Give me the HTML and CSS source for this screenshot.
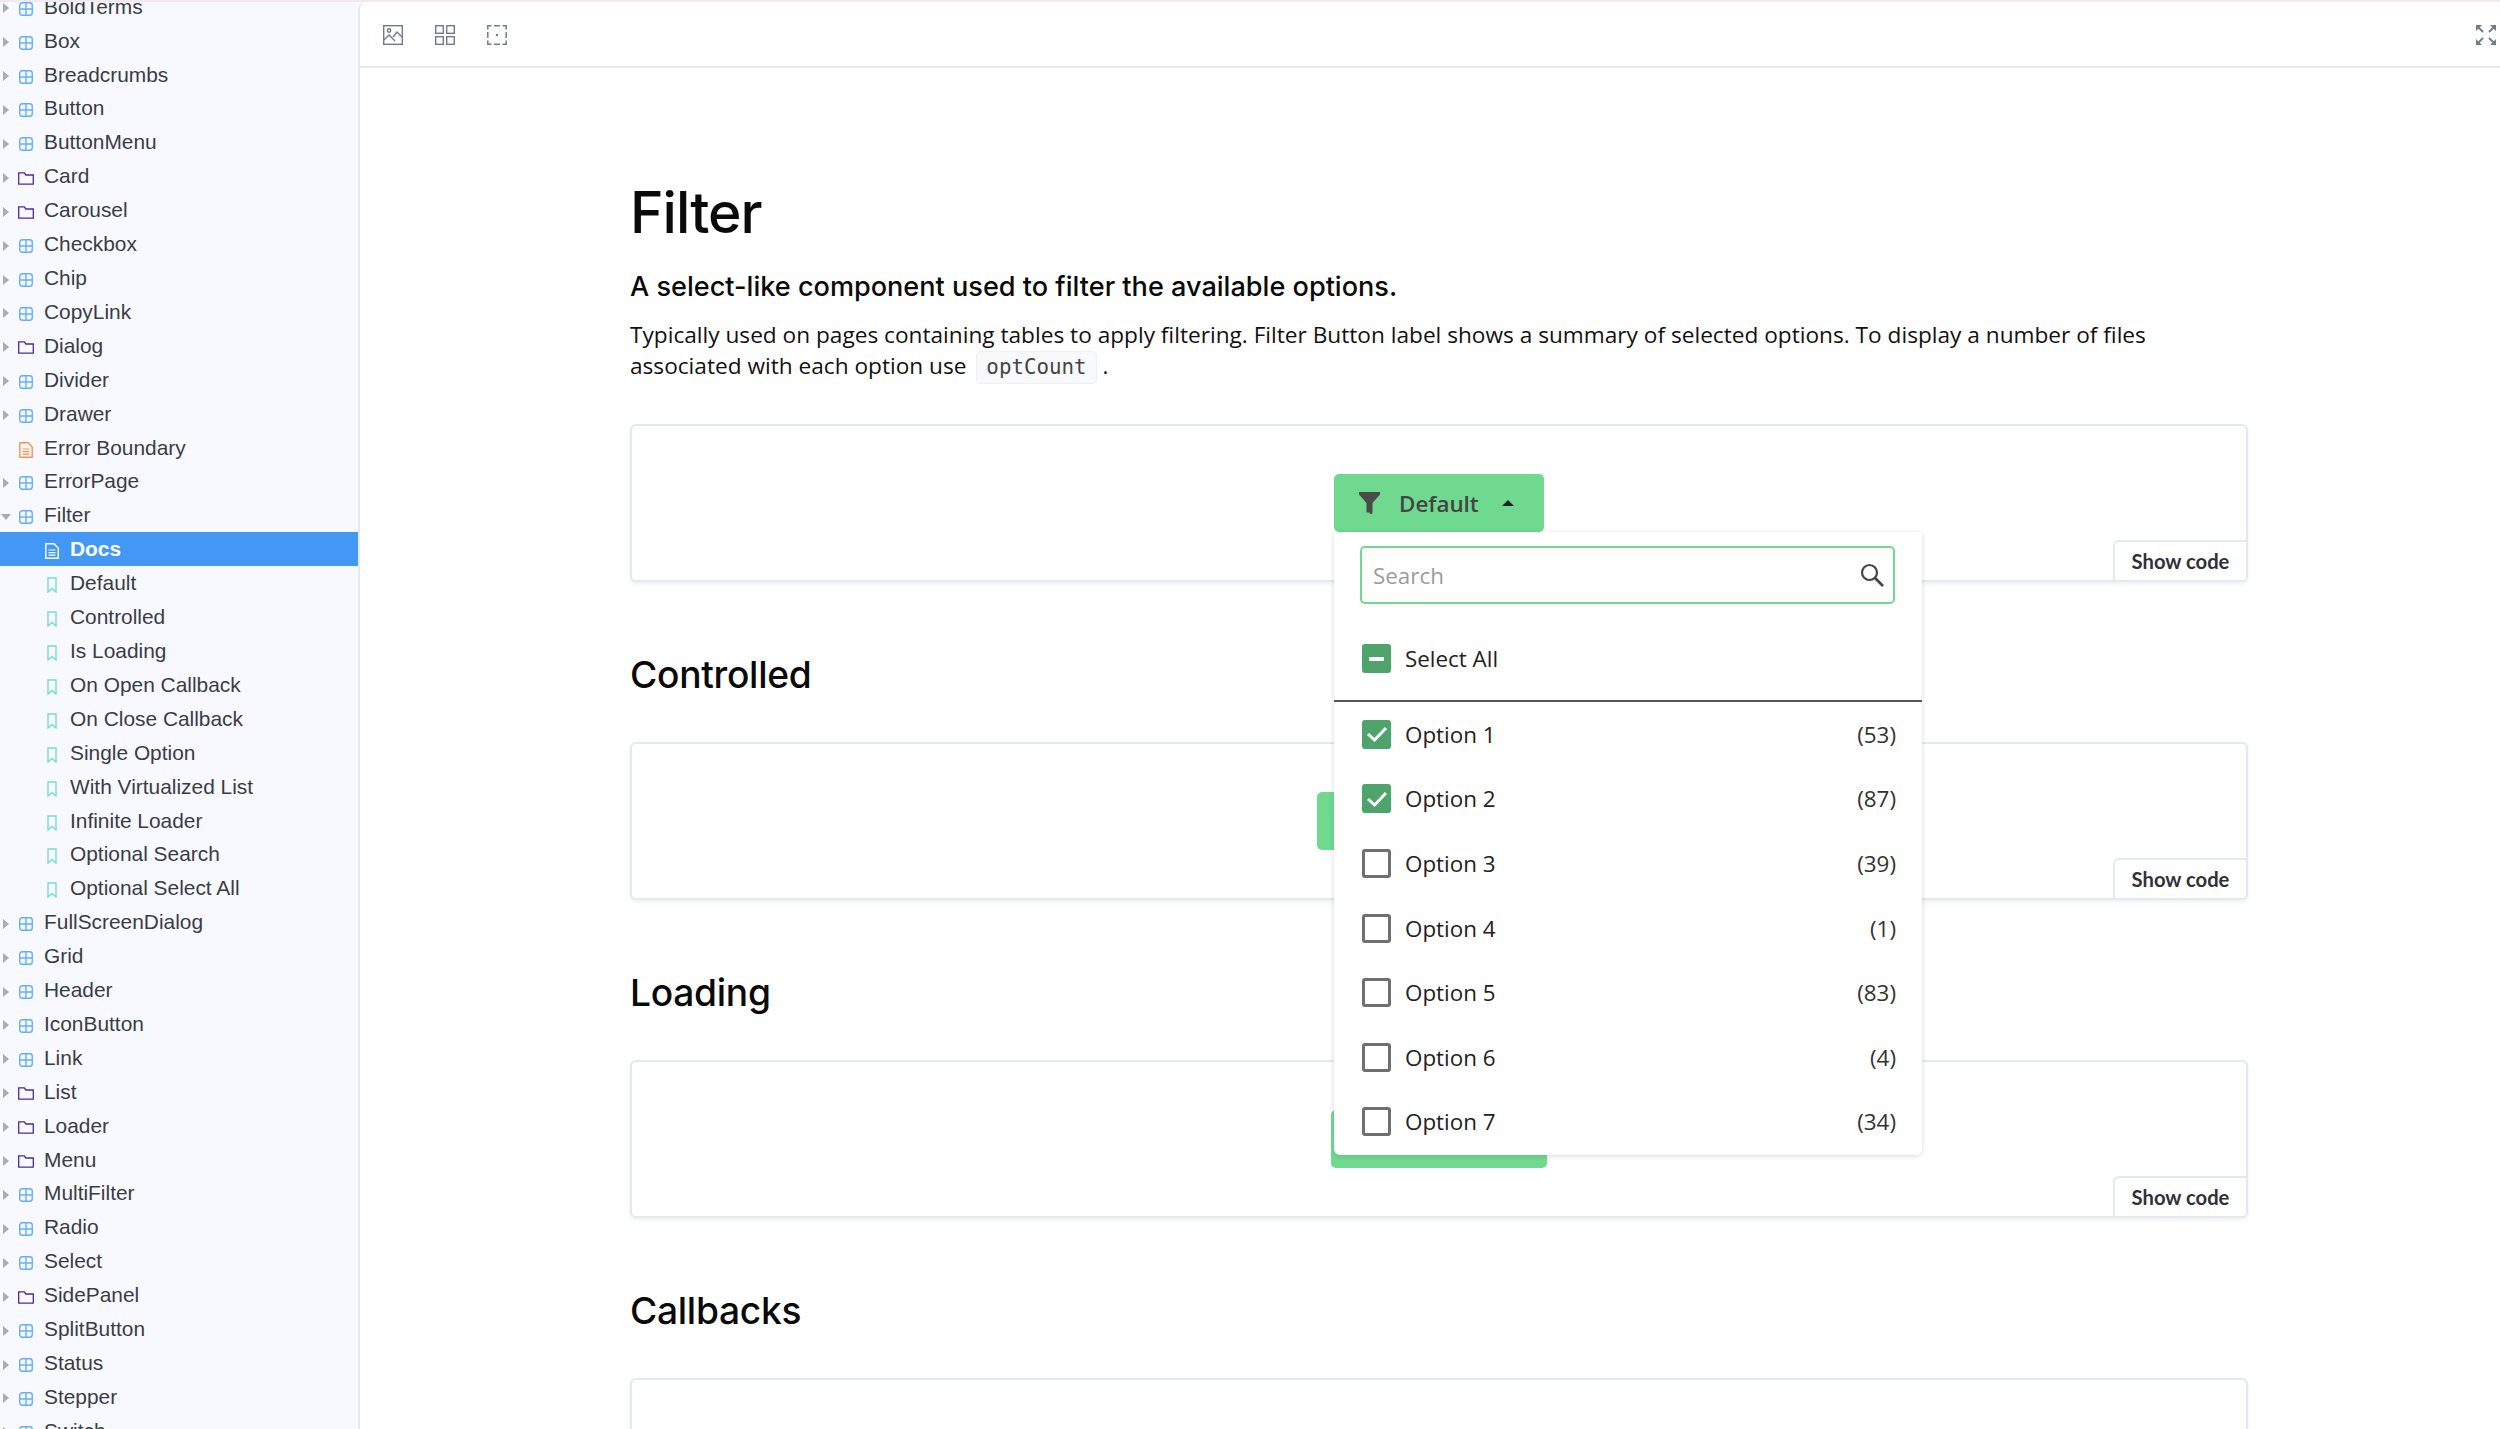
FILE: index.html
```html
<!DOCTYPE html>
<html lang="en">
<head>
<meta charset="utf-8">
<title>Filter</title>
<link rel="stylesheet" href="styles.css">
</head>
<body>
<svg class="defs" width="0" height="0" aria-hidden="true">
  <symbol id="i-comp" viewBox="0 0 14 14"><rect x="0.75" y="0.75" width="12.5" height="12.5" rx="2.5" fill="none" stroke="#63aeff" stroke-width="1.4"/><path d="M7 1v12M1 7h12" stroke="#63aeff" stroke-width="1.4"/></symbol>
  <symbol id="i-folder" viewBox="0 0 16 13"><path d="M.7.8h5.6l1.6 2.2h7.4v9.2H.7z" fill="none" stroke="#4b2a9e" stroke-width="1.3"/></symbol>
  <symbol id="i-doc" viewBox="0 0 14 16"><path d="M.8.8h8.2l4.2 4.2v10.2H.8z" fill="none" stroke="currentColor" stroke-width="1.4"/><path d="M3.5 7h7M3.5 9.6h7M3.5 12.2h7" stroke="currentColor" stroke-width="1.2"/></symbol>
  <symbol id="i-mark" viewBox="0 0 10 16"><path d="M1 1h8v14L5 11.5 1 15z" fill="none" stroke="#76dcd6" stroke-width="1.4"/></symbol>
  <symbol id="i-caret" viewBox="0 0 6 10"><path d="M0 0l6 5-6 5z" fill="#a9adb2"/></symbol>
  <symbol id="i-filter" viewBox="0 0 21 22"><path d="M0 0h21v2.5L13.5 11v9.5a1.5 1.5 0 0 1-3 0h-3V11L0 2.5z" fill="#4a4a4a"/></symbol>
  <symbol id="i-search" viewBox="0 0 24 24"><circle cx="9.5" cy="9.5" r="7.5" fill="none" stroke="#444" stroke-width="2.2"/><path d="M15 15l8 8" stroke="#444" stroke-width="2.6"/></symbol>
</svg>

<aside class="sidebar">
  <ul class="tree">
    <li class="row"><svg class="caret"><use href="#i-caret"/></svg><svg class="ic"><use href="#i-comp"/></svg><span>BoldTerms</span></li>
    <li class="row"><svg class="caret"><use href="#i-caret"/></svg><svg class="ic"><use href="#i-comp"/></svg><span>Box</span></li>
    <li class="row"><svg class="caret"><use href="#i-caret"/></svg><svg class="ic"><use href="#i-comp"/></svg><span>Breadcrumbs</span></li>
    <li class="row"><svg class="caret"><use href="#i-caret"/></svg><svg class="ic"><use href="#i-comp"/></svg><span>Button</span></li>
    <li class="row"><svg class="caret"><use href="#i-caret"/></svg><svg class="ic"><use href="#i-comp"/></svg><span>ButtonMenu</span></li>
    <li class="row"><svg class="caret"><use href="#i-caret"/></svg><svg class="ic folder"><use href="#i-folder"/></svg><span>Card</span></li>
    <li class="row"><svg class="caret"><use href="#i-caret"/></svg><svg class="ic folder"><use href="#i-folder"/></svg><span>Carousel</span></li>
    <li class="row"><svg class="caret"><use href="#i-caret"/></svg><svg class="ic"><use href="#i-comp"/></svg><span>Checkbox</span></li>
    <li class="row"><svg class="caret"><use href="#i-caret"/></svg><svg class="ic"><use href="#i-comp"/></svg><span>Chip</span></li>
    <li class="row"><svg class="caret"><use href="#i-caret"/></svg><svg class="ic"><use href="#i-comp"/></svg><span>CopyLink</span></li>
    <li class="row"><svg class="caret"><use href="#i-caret"/></svg><svg class="ic folder"><use href="#i-folder"/></svg><span>Dialog</span></li>
    <li class="row"><svg class="caret"><use href="#i-caret"/></svg><svg class="ic"><use href="#i-comp"/></svg><span>Divider</span></li>
    <li class="row"><svg class="caret"><use href="#i-caret"/></svg><svg class="ic"><use href="#i-comp"/></svg><span>Drawer</span></li>
    <li class="row"><span class="caret"></span><svg class="ic doc orange"><use href="#i-doc"/></svg><span>Error Boundary</span></li>
    <li class="row"><svg class="caret"><use href="#i-caret"/></svg><svg class="ic"><use href="#i-comp"/></svg><span>ErrorPage</span></li>
    <li class="row"><svg class="caret open"><use href="#i-caret"/></svg><svg class="ic"><use href="#i-comp"/></svg><span>Filter</span></li>
    <li class="row child selected"><svg class="ic doc"><use href="#i-doc"/></svg><span>Docs</span></li>
    <li class="row child"><svg class="ic mark"><use href="#i-mark"/></svg><span>Default</span></li>
    <li class="row child"><svg class="ic mark"><use href="#i-mark"/></svg><span>Controlled</span></li>
    <li class="row child"><svg class="ic mark"><use href="#i-mark"/></svg><span>Is Loading</span></li>
    <li class="row child"><svg class="ic mark"><use href="#i-mark"/></svg><span>On Open Callback</span></li>
    <li class="row child"><svg class="ic mark"><use href="#i-mark"/></svg><span>On Close Callback</span></li>
    <li class="row child"><svg class="ic mark"><use href="#i-mark"/></svg><span>Single Option</span></li>
    <li class="row child"><svg class="ic mark"><use href="#i-mark"/></svg><span>With Virtualized List</span></li>
    <li class="row child"><svg class="ic mark"><use href="#i-mark"/></svg><span>Infinite Loader</span></li>
    <li class="row child"><svg class="ic mark"><use href="#i-mark"/></svg><span>Optional Search</span></li>
    <li class="row child"><svg class="ic mark"><use href="#i-mark"/></svg><span>Optional Select All</span></li>
    <li class="row"><svg class="caret"><use href="#i-caret"/></svg><svg class="ic"><use href="#i-comp"/></svg><span>FullScreenDialog</span></li>
    <li class="row"><svg class="caret"><use href="#i-caret"/></svg><svg class="ic"><use href="#i-comp"/></svg><span>Grid</span></li>
    <li class="row"><svg class="caret"><use href="#i-caret"/></svg><svg class="ic"><use href="#i-comp"/></svg><span>Header</span></li>
    <li class="row"><svg class="caret"><use href="#i-caret"/></svg><svg class="ic"><use href="#i-comp"/></svg><span>IconButton</span></li>
    <li class="row"><svg class="caret"><use href="#i-caret"/></svg><svg class="ic"><use href="#i-comp"/></svg><span>Link</span></li>
    <li class="row"><svg class="caret"><use href="#i-caret"/></svg><svg class="ic folder"><use href="#i-folder"/></svg><span>List</span></li>
    <li class="row"><svg class="caret"><use href="#i-caret"/></svg><svg class="ic folder"><use href="#i-folder"/></svg><span>Loader</span></li>
    <li class="row"><svg class="caret"><use href="#i-caret"/></svg><svg class="ic folder"><use href="#i-folder"/></svg><span>Menu</span></li>
    <li class="row"><svg class="caret"><use href="#i-caret"/></svg><svg class="ic"><use href="#i-comp"/></svg><span>MultiFilter</span></li>
    <li class="row"><svg class="caret"><use href="#i-caret"/></svg><svg class="ic"><use href="#i-comp"/></svg><span>Radio</span></li>
    <li class="row"><svg class="caret"><use href="#i-caret"/></svg><svg class="ic"><use href="#i-comp"/></svg><span>Select</span></li>
    <li class="row"><svg class="caret"><use href="#i-caret"/></svg><svg class="ic folder"><use href="#i-folder"/></svg><span>SidePanel</span></li>
    <li class="row"><svg class="caret"><use href="#i-caret"/></svg><svg class="ic"><use href="#i-comp"/></svg><span>SplitButton</span></li>
    <li class="row"><svg class="caret"><use href="#i-caret"/></svg><svg class="ic"><use href="#i-comp"/></svg><span>Status</span></li>
    <li class="row"><svg class="caret"><use href="#i-caret"/></svg><svg class="ic"><use href="#i-comp"/></svg><span>Stepper</span></li>
    <li class="row"><svg class="caret"><use href="#i-caret"/></svg><svg class="ic"><use href="#i-comp"/></svg><span>Switch</span></li>
  </ul>
</aside>

<main class="panel">
  <div class="toolbar">
    <div class="tools">
      <svg class="tool" viewBox="0 0 20 20" fill="none" stroke="#6f7c8a" stroke-width="1.4"><rect x=".7" y=".7" width="18.6" height="18.6"/><circle cx="6" cy="5.5" r="1.7"/><path d="M1 15l5-5 6 6M10 12l4-5 5 5"/></svg>
      <svg class="tool" viewBox="0 0 20 20" fill="none" stroke="#6f7c8a" stroke-width="1.4"><rect x=".7" y=".7" width="7.6" height="7.6"/><rect x="11.7" y=".7" width="7.6" height="7.6"/><rect x=".7" y="11.7" width="7.6" height="7.6"/><rect x="11.7" y="11.7" width="7.6" height="7.6"/></svg>
      <svg class="tool" viewBox="0 0 20 20" fill="none" stroke="#6f7c8a" stroke-width="1.5"><path d="M.8 4.500V.8h3.700M7 .8h6M15.500.8h3.700v3.700M19.200 7v6M19.200 15.500v3.700h-3.700M13 19.200H7M4.500 19.200H.8v-3.700M.8 13V7"/><circle cx="10" cy="10" r="1.2" fill="#6f7c8a" stroke="none"/></svg>
    </div>
    <svg class="tool" viewBox="0 0 20 20" fill="#6f7c8a" stroke="#6f7c8a" stroke-width="1.8"><path d="M2 2l5 5M18 2l-5 5M2 18l5-5M18 18l-5-5" fill="none"/><path d="M0 0h6L0 6zM20 0h-6l6 6zM0 20h6l-6-6zM20 20h-6l6-6z" stroke="none"/></svg>
  </div>

  <div class="docs">
    <h1 class="title">Filter</h1>
    <p class="lead">A select-like component used to filter the available options.</p>
    <p class="desc">Typically used on pages containing tables to apply filtering. Filter Button label shows a summary of selected options. To display a number of files associated with each option use <code class="chip">optCount</code> .</p>

    <section class="card">
      <div class="anchor">
        <button class="fbtn">
          <svg class="ficon"><use href="#i-filter"/></svg>
          <span>Default</span>
          <span class="up"></span>
        </button>
        <div class="dropdown">
          <div class="searchwrap">
            <div class="search"><span>Search</span><svg class="sicon"><use href="#i-search"/></svg></div>
          </div>
          <div class="opt all"><span class="cb on"><span class="dash"></span></span><span class="label">Select All</span></div>
          <div class="list">
            <div class="opt"><span class="cb on"><svg class="tick" viewBox="0 0 22 16"><path d="M2 8l6.500 6L20 2" fill="none" stroke="#fff" stroke-width="3"/></svg></span><span class="label">Option 1</span><span class="count">(53)</span></div>
            <div class="opt"><span class="cb on"><svg class="tick" viewBox="0 0 22 16"><path d="M2 8l6.500 6L20 2" fill="none" stroke="#fff" stroke-width="3"/></svg></span><span class="label">Option 2</span><span class="count">(87)</span></div>
            <div class="opt"><span class="cb"></span><span class="label">Option 3</span><span class="count">(39)</span></div>
            <div class="opt"><span class="cb"></span><span class="label">Option 4</span><span class="count">(1)</span></div>
            <div class="opt"><span class="cb"></span><span class="label">Option 5</span><span class="count">(83)</span></div>
            <div class="opt"><span class="cb"></span><span class="label">Option 6</span><span class="count">(4)</span></div>
            <div class="opt"><span class="cb"></span><span class="label">Option 7</span><span class="count">(34)</span></div>
          </div>
        </div>
      </div>
      <button class="showcode">Show code</button>
    </section>

    <h2 class="sub">Controlled</h2>
    <section class="card">
      <button class="fbtn wide"><svg class="ficon"><use href="#i-filter"/></svg><span>Controlled</span><span class="down"></span></button>
      <button class="showcode">Show code</button>
    </section>

    <h2 class="sub">Loading</h2>
    <section class="card">
      <button class="fbtn mid"><svg class="ficon"><use href="#i-filter"/></svg><span>Default</span><span class="down"></span></button>
      <button class="showcode">Show code</button>
    </section>

    <h2 class="sub">Callbacks</h2>
    <section class="card"></section>
  </div>
</main>
</body>
</html>
```
FILE: styles.css
```css
* { box-sizing: border-box; }
html, body { margin: 0; height: 1429px; overflow: hidden; }
body {
  display: flex;
  border-top: 2px solid #f1e8f3;
  background: #f8f9fe;
  font-family: "Open Sans", "Noto Sans", sans-serif;
  color: #111;
}
.defs { position: absolute; }

/* Sidebar */
.sidebar {
  width: 358px;
  flex: none;
  overflow: hidden;
  height: 100%;
  background: #f8f9fe;
}
.tree {
  list-style: none;
  margin: -12.2px 0 0;
  padding: 0;
}
.row {
  height: 33.92px;
  display: flex;
  align-items: center;
  font-family: "Liberation Sans", Arial, sans-serif;
  font-size: 20.9px;
  color: #383d45;
  white-space: nowrap;
}
.caret { width: 6px; height: 10px; margin: 3px 0 0 3px; flex: none; display: block; }
.caret.open { transform: rotate(90deg); }
.ic { width: 14px; height: 14px; flex: none; margin: 4px 11px 0 10px; }
.ic.folder { width: 16px; height: 13px; margin: 4px 10px 0 9px; }
.ic.doc { height: 16px; color: #fff; }
.ic.doc.orange { color: #f6954a; }
.child { padding-left: 45px; }
.child .ic.doc { margin: 4px 11px 0 0; }
.child .ic.mark { width: 10px; height: 16px; margin: 4px 13px 0 2px; }
.selected {
  background: #4498f5;
  color: #fff;
  font-weight: 700;
}

/* Main panel */
.panel {
  flex: 1;
  min-width: 0;
  height: 100%;
  background: #fff;
  border-left: 2px solid #e7e9f0;
  border-top-left-radius: 8px;
  overflow: hidden;
}
.toolbar {
  height: 66px;
  padding: 2px 4px 0 23px;
  border-bottom: 2px solid #e4e8ee;
  display: flex;
  align-items: center;
  justify-content: space-between;
}
.tools { display: flex; gap: 32px; }
.tool { width: 20px; height: 20px; display: block; }

.docs { padding: 0 252px 0 270px; }
.title {
  margin: 0;
  padding-top: 110px;
  font-family: Inter, sans-serif;
  font-size: 57px;
  line-height: 70px;
  font-weight: 500;
  letter-spacing: -1px;
  color: #0a0a0a;
}
.lead {
  margin: 21px 0 0;
  font-family: Inter, sans-serif;
  font-size: 27.1px;
  line-height: 36px;
  font-weight: 500;
  color: #0a0a0a;
}
.desc {
  margin: 14px 0 0;
  max-width: 1540px;
  font-size: 22.65px;
  line-height: 31px;
  color: #111;
}
.chip {
  display: inline-block;
  font-family: "DejaVu Sans Mono", monospace;
  font-size: 20.8px;
  line-height: 31px;
  padding: 0 9px;
  margin: -3px 0 -3px 4px;
  background: #f8f9fb;
  border: 1px solid #eef1f6;
  border-radius: 5px;
  color: #444;
}

.card {
  position: relative;
  height: 158px;
  margin-top: 43px;
  border: 2px solid #e4e8ef;
  border-radius: 6px;
  background: #fff;
  box-shadow: 0 2px 4px rgba(100, 120, 150, .12);
  display: flex;
  align-items: center;
  justify-content: center;
}
.sub {
  margin: 68px 0 0;
  height: 49px;
  font-family: Inter, sans-serif;
  font-size: 37.2px;
  line-height: 49px;
  font-weight: 500;
  letter-spacing: -.3px;
  color: #0a0a0a;
}
.sub + .card { margin-top: 43px; }

.anchor { position: relative; }
.fbtn {
  height: 58px;
  width: 210px;
  display: flex;
  align-items: center;
  gap: 19px;
  padding: 0 0 0 25px;
  border: 0;
  border-radius: 5px;
  background: #6fd98f;
  font-family: "Open Sans", sans-serif;
  font-size: 22.4px;
  font-weight: 600;
  color: #444;
}
.fbtn.wide { width: 244px; }
.fbtn.mid { width: 216px; }
.ficon { width: 21px; height: 22px; flex: none; }
.up, .down {
  width: 0;
  height: 0;
  margin-left: 4px;
  border-left: 6px solid transparent;
  border-right: 6px solid transparent;
}
.up { border-bottom: 6px solid #222; }
.down { border-top: 6px solid #222; }

.showcode {
  position: absolute;
  right: 0;
  bottom: 0;
  width: 133px;
  height: 40px;
  padding: 0;
  border: 0;
  border-left: 2px solid #e4e8ef;
  border-top: 2px solid #e4e8ef;
  border-radius: 6px 0 4px 0;
  background: #fff;
  font-family: Lato, sans-serif;
  font-size: 20.2px;
  font-weight: 700;
  color: #2e3238;
}

/* Dropdown */
.dropdown {
  position: absolute;
  z-index: 5;
  left: 0;
  top: 58px;
  width: 588px;
  height: 623px;
  background: #fff;
  border-radius: 0 0 6px 6px;
  box-shadow: 0 1px 5px rgba(60, 70, 90, .2);
  font-size: 22.4px;
}
.searchwrap { padding: 14px 27px 0 26px; }
.search {
  height: 58px;
  border: 2px solid #6fd98f;
  border-radius: 5px;
  padding: 0 9px 0 11px;
  display: flex;
  align-items: center;
  justify-content: space-between;
  color: #9b9b9b;
}
.sicon { width: 24px; height: 24px; }
.opt {
  height: 64.6px;
  padding: 0 26px 0 28px;
  display: flex;
  align-items: center;
  color: #222;
}
.all {
  height: 98px;
  padding-top: 13px;
  border-bottom: 2px solid #555;
}
.cb {
  width: 29px;
  height: 29px;
  flex: none;
  margin-right: 14px;
  border: 3px solid #6f6f6f;
  border-radius: 3px;
  display: flex;
  align-items: center;
  justify-content: center;
}
.cb.on { background: #4ea46b; border-color: #4ea46b; }
.tick { width: 22px; height: 16px; flex: none; }
.dash { width: 15px; height: 4px; border-radius: 1px; background: #fff; }
.label { flex: 1; }
.count { color: #333; }
```
